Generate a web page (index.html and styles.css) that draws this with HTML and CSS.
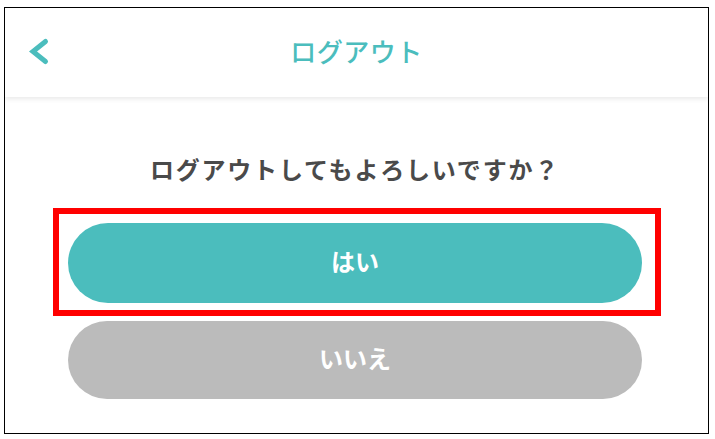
FILE: index.html
```html
<!DOCTYPE html>
<html lang="ja">
<head>
<meta charset="utf-8">
<title>ログアウト</title>
<link rel="stylesheet" href="styles.css">
</head>
<body>
<div class="frame">
  <header class="header">
    <div class="back">
      <svg class="back-icon" width="22" height="30" viewBox="0 0 22 30" aria-hidden="true">
        <path d="M17.5 4.5 L5 14.5 L17.5 24.5" fill="none" stroke="#4bbdbd" stroke-width="5" stroke-linecap="round" stroke-linejoin="miter"/>
      </svg>
    </div>
    <h1 class="title">ログアウト</h1>
    <div class="spacer"></div>
  </header>
  <main class="content">
    <p class="question">ログアウトしてもよろしいですか？</p>
    <div class="highlight-wrap">
      <button class="btn btn-yes">はい</button>
      <span class="highlight"></span>
    </div>
    <button class="btn btn-no">いいえ</button>
  </main>
</div>
</body>
</html>
```
FILE: styles.css
```css
* { box-sizing: border-box; }
html, body { margin: 0; padding: 0; background: #fff; }
body {
  width: 715px;
  height: 439px;
  font-family: "Noto Sans CJK JP", "Noto Sans", sans-serif;
}
.frame {
  margin: 7px 6px 5px 4px;
  height: 427px;
  border: 1px solid #000;
  background: #fff;
  overflow: hidden;
}
.header {
  height: 89px;
  display: grid;
  grid-template-columns: 1fr auto 1fr;
  align-items: center;
  padding-bottom: 4px;
  box-shadow: 0 2px 5px rgba(0, 0, 0, 0.09);
  position: relative;
}
.back {
  padding-left: 23px;
  display: flex;
  align-items: center;
}
.back-icon { display: block; margin-top: 3px; }
.title {
  margin: 0;
  font-size: 26px;
  font-weight: 500;
  color: #4bbdbd;
  line-height: 1;
  letter-spacing: 0.5px;
}
.content {
  padding: 54px 66px 0 63px;
  display: flex;
  flex-direction: column;
}
.question {
  margin: 0 0 36px;
  height: 36px;
  line-height: 36px;
  text-align: center;
  font-size: 24px;
  font-weight: 700;
  letter-spacing: 1.8px;
  color: #4a4a4a;
}
.highlight-wrap {
  position: relative;
}
.btn {
  display: flex;
  align-items: center;
  justify-content: center;
  width: 100%;
  border: 0;
  border-radius: 40px;
  color: #fff;
  font-family: "Noto Sans CJK JP", "Noto Sans", sans-serif;
  font-size: 24px;
  font-weight: 700;
  padding: 0 0 6px;
  letter-spacing: 0;
}
.btn-yes {
  height: 80px;
  background: #4bbdbd;
}
.btn-no {
  margin-top: 18px;
  height: 78px;
  background: #bbbbbb;
}
.highlight {
  position: absolute;
  top: -15px;
  left: -15px;
  right: -19px;
  bottom: -13px;
  border: 6px solid #ff0000;
  pointer-events: none;
}
```
